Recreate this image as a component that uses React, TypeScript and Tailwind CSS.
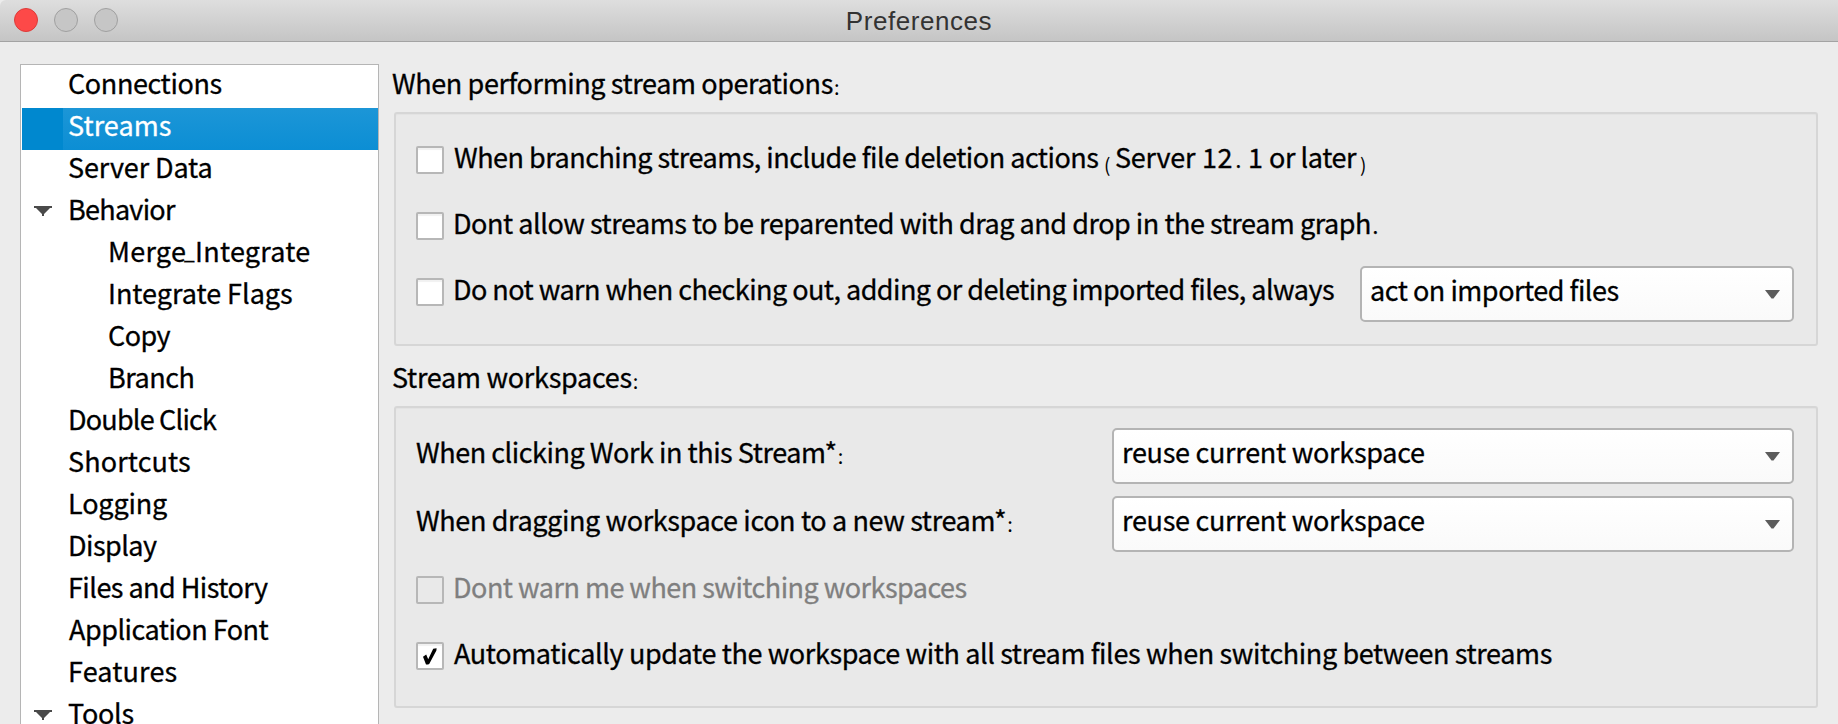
import type { ReactNode } from "react";

type Item = { label: ReactNode; className: string; expanded?: boolean; selected?: boolean };

const items: Item[] = [
  { label: "Connections", className: "pl-[46px] tracking-[-0.389px]" },
  { label: "Streams", className: "pl-[46px] tracking-[0.05px]", selected: true },
  { label: "Server Data", className: "pl-[46px] tracking-[-0.115px]" },
  { label: "Behavior", className: "pl-[46px] tracking-[-0.734px]", expanded: true },
  {
    label: (
      <>
        <span className="inline-block w-[76px]">Merge</span>
        <span className="relative top-[7px] inline-block w-[11px] scale-x-150 text-center font-light leading-none">-</span>
        <span>Integrate</span>
      </>
    ),
    className: "pl-[86px] tracking-[0.25px]",
  },
  { label: "Integrate Flags", className: "pl-[86px] tracking-[-0.026px]" },
  { label: "Copy", className: "pl-[86px] tracking-[-0.573px]" },
  { label: "Branch", className: "pl-[86px] tracking-[-0.485px]" },
  { label: "Double Click", className: "pl-[46px] tracking-[-0.798px]" },
  { label: "Shortcuts", className: "pl-[46px] tracking-[0.108px]" },
  { label: "Logging", className: "pl-[46px] tracking-[-0.17px]" },
  { label: "Display", className: "pl-[46px] tracking-[-0.541px]" },
  { label: "Files and History", className: "pl-[46px] tracking-[-0.538px]" },
  { label: "Application Font", className: "pl-[47px] tracking-[-0.505px]" },
  { label: "Features", className: "pl-[46px] tracking-[0.139px]" },
  { label: "Tools", className: "pl-[46px] tracking-[-0.267px]", expanded: true },
];

function Colon() {
  return <span className="relative top-px ml-px text-[20px] leading-none [-webkit-text-stroke:0px]">:</span>;
}

function Checkbox({ checked, disabled }: { checked?: boolean; disabled?: boolean }) {
  return (
    <span
      className={`mt-[6px] flex size-[28px] shrink-0 items-center justify-center rounded-[2px] border-2 border-[#b7b7b7] ${
        disabled ? "bg-[#e9e9e9]" : "bg-white shadow-[inset_0_2px_1px_#f1f1f1]"
      }`}
    >
      {checked && (
        <svg width="24" height="24" viewBox="0 0 24 24" fill="#000">
          <path d="M5 12.8 8.2 10.6 10.2 15.2 15.2 4.8 18.6 4.2 18.4 6.6 11.2 20 10 20.6 8 20.4Z" />
        </svg>
      )}
    </span>
  );
}

function Option({ children, checked, disabled, className }: { children: ReactNode; checked?: boolean; disabled?: boolean; className: string }) {
  return (
    <label className={`flex h-[66px] items-start ${disabled ? "text-[#7f7f7f]" : ""}`}>
      <Checkbox checked={checked} disabled={disabled} />
      <span className={`whitespace-pre ${className}`}>{children}</span>
    </label>
  );
}

function Select({ children, className }: { children: ReactNode; className: string }) {
  return (
    <div className={`flex h-[56px] shrink-0 items-start justify-between rounded-[5px] border-2 border-[#b4b4b4] bg-linear-to-b from-white to-[#fafafa] pr-[12px] pt-[5px] ${className}`}>
      <span>{children}</span>
      <svg className="mt-[17px]" width="15" height="9" viewBox="0 0 15 9" fill="#5c5c5c">
        <path d="M0 0H15L8.5 8.6H6.5Z" />
      </svg>
    </div>
  );
}

const panel = "rounded-[3px] border-2 border-[#d6d6d6] bg-[#e9e9e9] pl-[20px] pr-[22px] shadow-[inset_0_1px_1px_#e3e3e3]";

export default function App() {
  return (
    <div className="flex h-[724px] w-[1838px] flex-col overflow-hidden bg-[#ececec] font-['Noto_Sans_CJK_SC','Noto_Sans',sans-serif] text-[27px] leading-[34px] text-black [-webkit-text-stroke:0.3px]">
      <header className="grid h-[42px] shrink-0 grid-cols-[1fr_auto_1fr] items-start rounded-tl-[6px] border-b border-[#a3a3a3] bg-linear-to-b from-[#dedede] to-[#c5c5c5]">
        <div className="flex gap-4 pl-[14px] pt-2">
          <span className="size-6 rounded-full border border-[#dd3b39] bg-[#fd4948]" />
          <span className="size-6 rounded-full border border-[#a0a0a0] bg-[#c6c6c6]" />
          <span className="size-6 rounded-full border border-[#a0a0a0] bg-[#c6c6c6]" />
        </div>
        <h1 className="pt-[4px] font-['Liberation_Sans',sans-serif] text-[26px] tracking-[0.56px] text-[#333] [-webkit-text-stroke:0px]">Preferences</h1>
      </header>

      <div className="flex min-h-0 flex-1 items-start">
        <nav className="ml-5 mt-[22px] h-[680px] w-[359px] shrink-0 overflow-hidden border border-[#b5b5b5] bg-white pl-px pt-px">
          {items.map((item, i) => (
            <div
              key={i}
              className={`flex h-[42px] items-start ${
                item.selected
                  ? "bg-[linear-gradient(to_right,#0088cf_41px,transparent_41px),linear-gradient(to_bottom,#1c96d7,#0c8ed4)] text-white"
                  : ""
              }`}
            >
              {item.expanded && (
                <svg className="-mr-[30px] ml-[12px] mt-[14px] shrink-0" width="18" height="10" viewBox="0 0 18 10" fill="#4a4a4a">
                  <path d="M0 0H18V2H16L10 8V10H8V8L2 2H0Z" />
                </svg>
              )}
              <span className={`whitespace-pre ${item.className}`}>{item.label}</span>
            </div>
          ))}
        </nav>

        <main className="ml-[14px] mt-[24px] w-[1425px]">
          <h2 className="-ml-px h-[46px] tracking-[-0.4px]">
            When performing stream operations
            <Colon />
          </h2>
          <section className={`ml-px h-[234px] pt-[26px] ${panel}`}>
            <Option className="ml-[10px]">
              <span className="inline-block w-[650px] tracking-[-0.5px]">When branching streams, include file deletion actions </span>
              <span className="relative top-[4px] inline-block w-[11px] text-[19px] leading-none [-webkit-text-stroke:0px]">(</span>
              <span className="inline-block w-[87px] tracking-[-0.245px]">Server </span>
              <span className="inline-block w-[33px] tracking-[0.5px]">12</span>
              <span className="inline-block w-[13px] font-light">.</span>
              <span className="inline-block w-[21px]">1 </span>
              <span className="inline-block w-[91px] tracking-[-0.44px]">or later</span>
              <span className="relative top-[4px] inline-block text-[19px] leading-none [-webkit-text-stroke:0px]">)</span>
            </Option>
            <Option className="ml-[9px] tracking-[-0.471px]">
              Dont allow streams to be reparented with drag and drop in the stream graph<span className="ml-[1px] font-light">.</span>
            </Option>
            <div className="flex items-start justify-between">
              <Option className="ml-[9px] tracking-[-0.555px]">Do not warn when checking out, adding or deleting imported files, always</Option>
              <Select className="-mt-[6px] w-[434px] pl-[8px] tracking-[-0.482px]">act on imported files</Select>
            </div>
          </section>

          <h2 className="-ml-px mt-[14px] h-[46px] tracking-[-0.282px]">
            Stream workspaces
            <Colon />
          </h2>
          <section className={`ml-px h-[302px] pt-[20px] ${panel}`}>
            <div className="flex h-[68px] items-start justify-between">
              <span className="mt-[7px] tracking-[-0.464px]">
                When clicking Work in this Stream*
                <Colon />
              </span>
              <Select className="w-[682px] pl-[8px] tracking-[-0.28px]">reuse current workspace</Select>
            </div>
            <div className="flex h-[74px] items-start justify-between">
              <span className="mt-[7px] tracking-[-0.379px]">
                When dragging workspace icon to a new stream*
                <Colon />
              </span>
              <Select className="w-[682px] pl-[8px] tracking-[-0.28px]">reuse current workspace</Select>
            </div>
            <Option disabled className="ml-[9px] tracking-[-0.528px]">Dont warn me when switching workspaces</Option>
            <Option checked className="ml-[10px] tracking-[-0.385px]">Automatically update the workspace with all stream files when switching between streams</Option>
          </section>
        </main>
      </div>
    </div>
  );
}
